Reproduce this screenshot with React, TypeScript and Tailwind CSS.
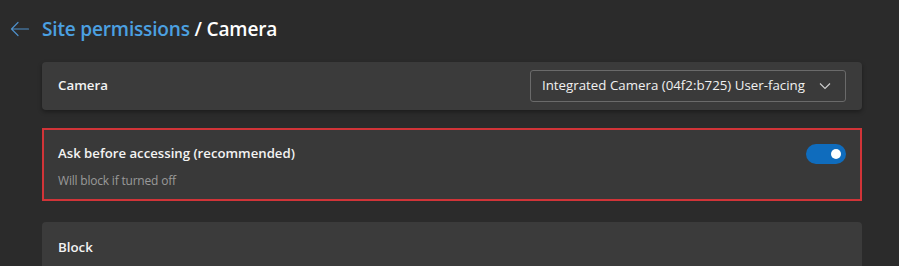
import React from "react";

export default function App() {
  const font = { fontFamily: '"Segoe UI", "Open Sans", "Noto Sans", sans-serif' };
  return (
    <div className="w-[899px] h-[266px] overflow-hidden bg-[#2b2b2b] text-white" style={font}>
      <div className="flex items-center h-[58px] pl-[10px]">
        <svg width="20" height="16" viewBox="0 0 20 16" className="mr-[12px]">
          <path d="M1.5 8 H18.5 M1.5 8 L8 1.5 M1.5 8 L8 14.5" stroke="#4f8fc9" strokeWidth="1.2" fill="none" strokeLinecap="round" />
        </svg>
        <div className="text-[19.1px] font-semibold tracking-[-0.2px]">
          <span className="text-[#4ba0e1]">Site permissions</span>
          <span className="text-white"> / Camera</span>
        </div>
      </div>
      <div className="pl-[42px] pr-[37px] flex flex-col">
        <div className="mt-[4px] h-[48px] bg-[#3b3b3b] rounded-[4px] shadow-[0_2px_4px_rgba(0,0,0,0.35)] flex items-center justify-between pl-[16px] pr-[16px]">
          <span className="text-[13.3px] font-semibold text-[#f3f3f3]">Camera</span>
          <div className="w-[316px] h-[32px] border border-[#6a6a6a] rounded-[3px] flex items-center justify-between pl-[11px] pr-[14px] bg-[#3a3a3a]">
            <span className="text-[13.3px] text-[#f0f0f0]">Integrated Camera (04f2:b725) User-facing</span>
            <svg width="12" height="8" viewBox="0 0 12 8">
              <path d="M1 1.5 L6 6.5 L11 1.5" stroke="#cfcfcf" strokeWidth="1.1" fill="none" />
            </svg>
          </div>
        </div>
        <div className="mt-[18px] h-[73px] bg-[#393939] border-2 border-[#d13438] flex items-start justify-between pl-[14px] pr-[14px]">
          <div className="flex flex-col pt-[13px]">
            <span className="text-[13.2px] font-semibold text-[#f3f3f3] leading-[20px]">Ask before accessing (recommended)</span>
            <span className="text-[12px] tracking-[-0.2px] text-[#9a9a9a] leading-[16px] mt-[10px]">Will block if turned off</span>
          </div>
          <div className="mt-[14px] w-[40px] h-[20px] rounded-full bg-[#0f6cbd] flex items-center justify-end pr-[5px]">
            <div className="w-[10px] h-[10px] rounded-full bg-white" />
          </div>
        </div>
        <div className="mt-[21px] h-[60px] bg-[#3b3b3b] rounded-[4px] pl-[16px] pt-[12px]">
          <span className="text-[13.3px] font-semibold text-[#f3f3f3]">Block</span>
        </div>
      </div>
    </div>
  );
}
